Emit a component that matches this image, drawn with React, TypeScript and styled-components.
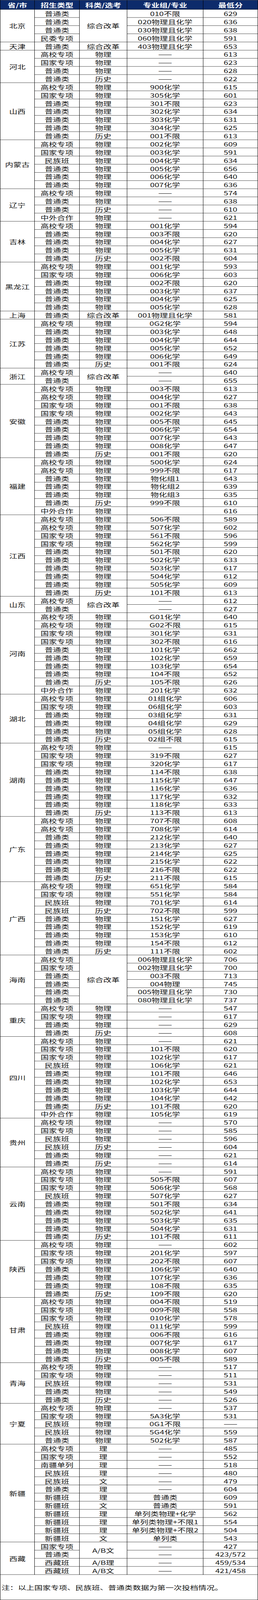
import React, { useEffect, useState } from 'react'
import styled, { createGlobalStyle } from 'styled-components'

const PAGE_HEIGHT = 5888

const GlobalStyle = createGlobalStyle`
  html, body {
    margin: 0;
    padding: 0;
    background: #fff;
    overflow: hidden;
  }
  body {
    font-family: "Noto Sans CJK SC", "Noto Sans", sans-serif;
    color: #111;
  }
`

const Page = styled.div`
  width: 661px;
  overflow: hidden;
`

const Sheet = styled.div`
  width: 661px;
  box-sizing: border-box;
  border-left: 1px solid #000;
  border-top: 1px solid #000;
  font-size: 21px;
  line-height: 28px;
  transform-origin: top left;
`

const Grid = styled.div`
  display: grid;
  grid-template-columns: 88px 115px 122px 195px 140px;
  grid-template-rows: 34px;
  grid-auto-rows: 30px;
`

const HeadCell = styled.div`
  display: flex;
  align-items: center;
  justify-content: center;
  box-sizing: border-box;
  background: #0d2b6b;
  color: #fff;
  font-weight: 700;
  border-right: 1px solid #000;
  border-bottom: 1px solid #000;
  white-space: nowrap;
`

const Cell = styled.div<{ $col: number; $span?: number }>`
  grid-column: ${(p) => p.$col};
  grid-row: span ${(p) => p.$span ?? 1};
  display: flex;
  align-items: center;
  justify-content: center;
  box-sizing: border-box;
  border-right: 1px solid #000;
  border-bottom: 1px solid #000;
  white-space: nowrap;
`

const Note = styled.div`
  height: 93px;
  box-sizing: border-box;
  display: flex;
  align-items: center;
  padding-left: 3px;
  border-right: 1px solid #000;
  border-bottom: 1px solid #000;
  white-space: nowrap;
`

const DASH = '——'

// type|subject|major|score ; "-" = dash, "^" = merged with above, "*n" = rowspan
const DATA: [string, string[]][] = [
  ['北京', ['普通类|综合改革*4|010不限|629', '普通类|^|020物理且化学|636', '普通类|^|030物理且化学|638', '民委专项|^|060物理且化学|591']],
  ['天津', ['普通类|综合改革|403物理且化学|653']],
  ['河北', ['高校专项|物理|-|613', '国家专项|物理|-|623', '普通类|物理|-|628', '普通类|历史|-|622']],
  ['山西', ['高校专项|物理|900化学|615', '国家专项|物理|305化学|601', '普通类|物理|301不限|623', '普通类|物理|302化学|634', '普通类|物理|303化学|631', '普通类|物理|304化学|625', '普通类|历史|001不限|613']],
  ['内蒙古', ['高校专项|物理|002化学|609', '国家专项|物理|003化学|591', '民族班|物理|004化学|634', '普通类|物理|005化学|656', '普通类|物理|006化学|640', '普通类|物理|007化学|636']],
  ['辽宁', ['高校专项|物理|-|574', '普通类|物理|-|638', '普通类|历史|-|610', '中外合作|物理|-|621']],
  ['吉林', ['高校专项|物理|001化学|594', '普通类|物理|003不限|620', '普通类|物理|004化学|627', '普通类|物理|005化学|631', '普通类|历史|002不限|604']],
  ['黑龙江', ['高校专项|物理|001化学|593', '国家专项|物理|006化学|603', '普通类|物理|002不限|620', '普通类|物理|003化学|637', '普通类|物理|004化学|625', '普通类|物理|005化学|628']],
  ['上海', ['普通类|综合改革|001物理且化学|581']],
  ['江苏', ['高校专项|物理|0G2化学|594', '普通类|物理|003化学|648', '普通类|物理|004化学|644', '普通类|物理|005化学|652', '普通类|物理|006化学|649', '普通类|历史|001不限|624']],
  ['浙江', ['高校专项|综合改革*2|-|640', '普通类|^|-|655']],
  ['安徽', ['高校专项|物理|003不限|613', '高校专项|物理|004化学|627', '国家专项|物理|001不限|638', '国家专项|物理|002化学|643', '普通类|物理|005不限|645', '普通类|物理|006化学|654', '普通类|物理|007化学|643', '普通类|物理|008化学|647', '普通类|历史|001不限|620']],
  ['福建', ['高校专项|物理|500化学|624', '高校专项|物理|999不限|617', '普通类|物理|物化组1|643', '普通类|物理|物化组2|639', '普通类|物理|物化组3|635', '普通类|历史|999不限|610', '中外合作|物理||616']],
  ['江西', ['高校专项|物理|506不限|589', '高校专项|物理|507化学|602', '国家专项|物理|561不限|596', '国家专项|物理|562化学|599', '普通类|物理|501不限|620', '普通类|物理|502化学|633', '普通类|物理|503化学|617', '普通类|物理|504化学|612', '普通类|物理|505化学|609', '普通类|历史|101不限|613']],
  ['山东', ['高校专项|综合改革*2|-|612', '普通类|^|-|627']],
  ['河南', ['高校专项|物理|G01化学|640', '高校专项|物理|G02不限|615', '国家专项|物理|301化学|631', '国家专项|物理|302不限|616', '普通类|物理|101化学|662', '普通类|物理|102化学|659', '普通类|物理|103化学|654', '普通类|物理|104不限|652', '普通类|历史|105不限|626', '中外合作|物理|201化学|632']],
  ['湖北', ['高校专项|物理|01组化学|606', '国家专项|物理|06组化学|603', '普通类|物理|03组化学|631', '普通类|物理|04组化学|629', '普通类|物理|05组化学|628', '普通类|历史|02组不限|615']],
  ['湖南', ['高校专项|物理|-|615', '国家专项|物理|319不限|627', '国家专项|物理|320化学|617', '普通类|物理|114不限|638', '普通类|物理|115化学|647', '普通类|物理|116化学|636', '普通类|物理|117化学|632', '普通类|物理|118化学|633', '普通类|历史|113不限|613']],
  ['广东', ['高校专项|物理|707不限|608', '高校专项|物理|708化学|614', '普通类|物理|212化学|640', '普通类|物理|213化学|627', '普通类|物理|214化学|625', '普通类|物理|215化学|622', '普通类|物理|216不限|622', '普通类|历史|211不限|615']],
  ['广西', ['高校专项|物理|651化学|584', '国家专项|物理|551化学|584', '民族班|物理|701化学|614', '民族班|历史|702不限|599', '普通类|物理|151化学|627', '普通类|物理|152化学|619', '普通类|物理|153化学|610', '普通类|物理|154不限|612', '普通类|历史|111不限|602']],
  ['海南', ['高校专项|综合改革*6|006物理且化学|706', '国家专项|^|002物理且化学|700', '普通类|^|003不限|713', '普通类|^|004物理|745', '普通类|^|005物理且化学|730', '普通类|^|080物理且化学|737']],
  ['重庆', ['高校专项|物理|-|547', '国家专项|物理|-|617', '普通类|物理|-|629', '普通类|历史|-|608']],
  ['四川', ['高校专项|物理|-|621', '国家专项|物理|101不限|620', '国家专项|物理|102化学|617', '民族班|物理|106化学|621', '普通类|物理|101不限|646', '普通类|物理|102化学|653', '普通类|物理|103化学|644', '普通类|物理|104化学|642', '普通类|历史|101不限|620', '中外合作|物理|105化学|619']],
  ['贵州', ['高校专项|物理|-|570', '国家专项|物理|-|585', '民族班|物理|-|596', '民族班|历史|-|604', '普通类|物理|-|621', '普通类|历史|-|614']],
  ['云南', ['高校专项|物理|-|591', '国家专项|物理|505不限|607', '国家专项|物理|506化学|568', '民族班|物理|507化学|627', '普通类|物理|501不限|634', '普通类|物理|502化学|641', '普通类|物理|503化学|635', '普通类|物理|504化学|631', '普通类|历史|101不限|611']],
  ['陕西', ['高校专项|物理|-|602', '国家专项|物理|201化学|597', '国家专项|物理|202不限|607', '普通类|物理|106化学|640', '普通类|物理|107化学|636', '普通类|物理|108不限|635', '普通类|历史|109不限|620']],
  ['甘肃', ['高校专项|物理|004不限|519', '国家专项|物理|009不限|558', '国家专项|物理|010化学|578', '民族班|物理|011化学|599', '普通类|物理|006不限|616', '普通类|物理|007化学|617', '普通类|物理|008化学|607', '普通类|历史|005不限|589']],
  ['青海', ['高校专项|物理|-|517', '国家专项|物理|-|511', '民族班|物理|-|531', '普通类|物理|-|549', '普通类|历史|-|526']],
  ['宁夏', ['高校专项|物理|-|537', '国家专项|物理|5A3化学|531', '民族班|物理|0G1不限|-', '民族班|物理|5G4化学|559', '普通类|物理|502化学|587']],
  ['新疆', ['高校专项|理|-|485', '国家专项|理|-|552', '南疆单列|理|-|518', '民族班|理|-|480', '民族班|文|-|479', '普通类|理|-|604', '新疆班|理|普通类|609', '新疆班|文|普通类|591', '新疆班|理|单列类物理+化学|562', '新疆班|理|单列类物理+不限1|554', '新疆班|理|单列类物理+不限2|504', '新疆班|文|单列类|543']],
  ['西藏', ['国家专项|A/B文*2|-|427', '普通类|^|-|423/572', '西藏班|A/B理|-|459/534', '西藏班|A/B文|-|421/458']],
]

const HEADERS = ['省/市', '招生类型', '科类/选考', '专业组/专业', '最低分']

const show = (v: string) => (v === '-' ? DASH : v)

function renderProvince(name: string, lines: string[]) {
  return lines.map((line, i) => {
    const [type, subject, major, score] = line.split('|')
    const [subjText, span] = subject.split('*')
    return (
      <React.Fragment key={`${name}-${i}`}>
        {i === 0 && (
          <Cell $col={1} $span={lines.length}>
            {name}
          </Cell>
        )}
        <Cell $col={2}>{type}</Cell>
        {subjText !== '^' && (
          <Cell $col={3} $span={span ? Number(span) : 1}>
            {subjText}
          </Cell>
        )}
        <Cell $col={4}>{show(major)}</Cell>
        <Cell $col={5}>{show(score)}</Cell>
      </React.Fragment>
    )
  })
}

/** Fits the full-height sheet into the window the page is photographed in */
function useFitScale() {
  const read = () => Math.min(1, window.innerHeight / PAGE_HEIGHT)
  const [scale, setScale] = useState(read)
  useEffect(() => {
    const onResize = () => setScale(read())
    window.addEventListener('resize', onResize)
    return () => window.removeEventListener('resize', onResize)
  }, [])
  return scale
}

export default function App() {
  const scale = useFitScale()
  return (
    <>
      <GlobalStyle />
      <Page style={{ height: PAGE_HEIGHT * scale }}>
        <Sheet style={{ transform: `scaleY(${scale})` }}>
          <Grid>
            {HEADERS.map((h) => (
              <HeadCell key={h}>{h}</HeadCell>
            ))}
            {DATA.map(([name, lines]) => renderProvince(name, lines))}
          </Grid>
          <Note>注：以上国家专项、民族班、普通类数据为第一次投档情况。</Note>
        </Sheet>
      </Page>
    </>
  )
}
